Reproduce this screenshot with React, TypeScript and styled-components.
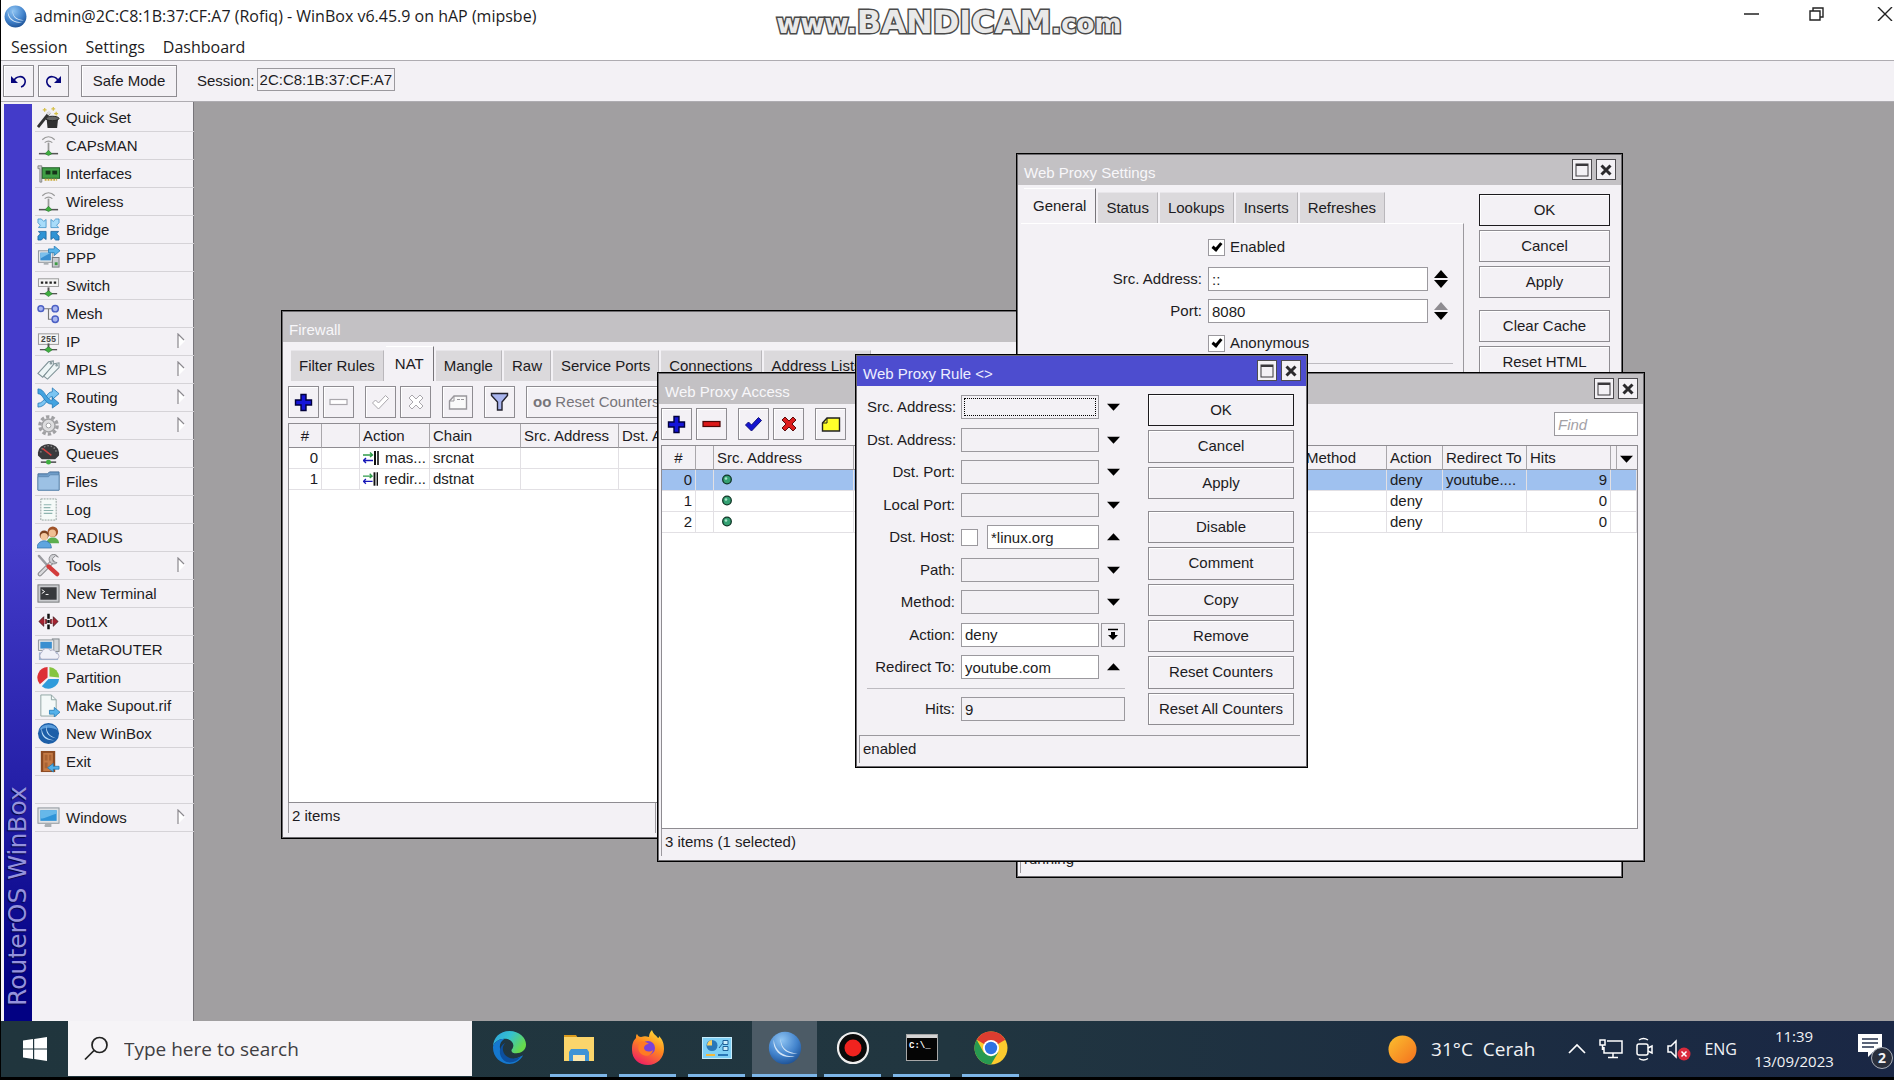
import React from 'react';
import styled, { createGlobalStyle, css } from 'styled-components';

const ui = '"Liberation Sans", Arial, sans-serif';
const shell = '"Open Sans", "Segoe UI", sans-serif';
const face = '#f3f1f5';
const ink = '#1c1b22';
const line = '#9b999e';

const Global = createGlobalStyle`
  *, *::before, *::after { box-sizing: border-box; }
  html, body, #root { height: 100%; }
  body { margin: 0; background: #000; color: ${ink}; font: 15px/20px ${ui}; overflow: hidden; }
  button, input, select { font: inherit; color: inherit; margin: 0; border-radius: 0; }
  button { padding: 0; cursor: default; }
`;

const Screen = styled.div`
  display: flex;
  flex-direction: column;
  height: 100%;
  padding: 0 0 3px 1px;
`;

/* ---------- application chrome ---------- */

const TitleStrip = styled.header`
  display: grid;
  grid-template-columns: 1fr auto 1fr;
  align-items: start;
  height: 37px;
  padding-left: 3px;
  background: #fff;
  font: 16px/24px ${shell};
`;
const AppName = styled.h1`
  display: flex;
  align-items: center;
  gap: 7px;
  margin: 0;
  padding-top: 4px;
  font: inherit;
  white-space: nowrap;
`;
const Watermark = styled.div`
  display: flex;
  align-items: baseline;
  padding-top: 7px;
  font: bold 26px/30px "DejaVu Sans", sans-serif;
  color: #e9e9e9;
  -webkit-text-stroke: 3px #4a4a4a;
  paint-order: stroke fill;
`;
const WatermarkName = styled.span`
  font-size: 32px;
`;
const Controls = styled.div`
  display: flex;
  justify-content: flex-end;
  overflow: hidden;
`;
const Control = styled.button`
  display: flex;
  align-items: center;
  justify-content: center;
  flex: none;
  width: 64px;
  height: 28px;
  border: 0;
  background: none;
  &:last-child { width: 46px; justify-content: flex-end; }
`;
const MenuBar = styled.nav`
  display: flex;
  align-items: flex-start;
  gap: 18px;
  height: 24px;
  padding: 0 10px;
  background: #fff;
  border-bottom: 1px solid #aeacb1;
`;
const MenuItem = styled.button`
  border: 0;
  background: none;
  font: 16px/20px ${shell};
`;
const MainBar = styled.div`
  display: flex;
  align-items: center;
  height: 41px;
  padding: 0 2px;
  background: ${face};
  border-bottom: 1px solid #aeacb1;
`;
const plate = css`
  border: 1px solid #8e8c91;
  background: ${face};
  box-shadow: inset 1px 1px 0 #fff;
`;
const ToolButton = styled.button<{ $wide?: boolean }>`
  ${plate}
  display: flex;
  align-items: center;
  justify-content: center;
  gap: 4px;
  flex: none;
  width: ${(p) => (p.$wide ? 'auto' : '31px')};
  padding: ${(p) => (p.$wide ? '0 6px' : '0')};
  height: 32px;
  color: inherit;
  &:disabled { color: #77757a; }
`;
const ToolGroup = styled.div`
  display: flex;
  gap: 4px;
`;
const SafeMode = styled(ToolButton)`
  width: 96px;
  margin: 0 20px 0 12px;
`;
const SessionField = styled.input`
  width: 138px;
  height: 23px;
  margin: 0 0 4px 2px;
  padding: 0 2px;
  border: 1px solid ${line};
  background: ${face};
`;

/* ---------- sidebar ---------- */

const Main = styled.main`
  display: flex;
  flex: 1;
  min-height: 0;
`;
const Side = styled.aside`
  display: flex;
  flex: none;
  width: 193px;
  padding: 2px 0 0 3px;
  background: ${face};
  border-right: 1px solid #77757a;
`;
const Spine = styled.div`
  display: flex;
  flex: none;
  width: 28px;
  padding-top: 15px;
  background: linear-gradient(to top, #433bc9 0%, #433bc9 48%, #2520a8 74%, #020183 96%);
  color: #9492dc;
  font: 25px/28px "DejaVu Sans", sans-serif;
  text-shadow: -1px -1px 1px #06053c;
  writing-mode: vertical-rl;
  transform: rotate(180deg);
  white-space: nowrap;
`;
const SideList = styled.ul`
  flex: 1;
  margin: 0;
  padding: 0 3px;
  list-style: none;
`;
const SideItem = styled.li`
  height: 28px;
  border-bottom: 1px solid #d5d3d7;
`;
const SideButton = styled.button`
  display: grid;
  grid-template-columns: 23px 1fr 10px;
  column-gap: 6px;
  align-items: center;
  width: 100%;
  height: 27px;
  padding: 0 10px 0 2px;
  border: 0;
  background: none;
  text-align: left;
  white-space: nowrap;
`;

/* ---------- windows on the desktop ---------- */

const Desktop = styled.section`
  position: relative;
  flex: 1;
  overflow: hidden;
  background: #a19fa1;
`;
const Frame = styled.section<{ $x: number; $y: number; $w: number; $h: number }>`
  position: absolute;
  left: ${(p) => p.$x}px;
  top: ${(p) => p.$y}px;
  width: ${(p) => p.$w}px;
  height: ${(p) => p.$h}px;
  display: flex;
  flex-direction: column;
  border: 1px solid #000;
  outline: 1px solid #6c6a6e;
  outline-offset: -2px;
  background: ${face};
`;
const Caption = styled.header<{ $active?: boolean }>`
  display: flex;
  align-items: center;
  gap: 4px;
  flex: none;
  height: 31px;
  padding: 0 6px 0 7px;
  background: ${(p) => (p.$active ? '#4d4dcf' : '#c3c1c4')};
  color: ${(p) => (p.$active ? '#eeedff' : '#f8f7fa')};
`;
const CaptionText = styled.h2`
  flex: 1;
  margin: 0;
  padding-top: 6px;
  font: inherit;
`;
const CaptionButton = styled.button`
  display: flex;
  align-items: center;
  justify-content: center;
  width: 20px;
  height: 21px;
  border: 1px solid #4e4c50;
  background: ${face};
  color: #2b2a2d;
`;
const StatusBar = styled.footer<{ $tall?: boolean }>`
  display: flex;
  flex: none;
  height: ${(p) => (p.$tall ? '30px' : '27px')};
  border-left: 1px solid ${line};
`;
const StatusCell = styled.div<{ $w?: number }>`
  flex: ${(p) => (p.$w ? 'none' : '1')};
  width: ${(p) => (p.$w ? p.$w + 'px' : 'auto')};
  padding: 3px;
  & + & { border-left: 1px solid ${line}; }
`;
const Tabs = styled.div`
  display: flex;
  align-items: flex-end;
  gap: 2px;
  flex: none;
  height: 35px;
  padding-left: 3px;
`;
const Tab = styled.button<{ $on?: boolean }>`
  height: ${(p) => (p.$on ? '35px' : '31px')};
  padding: ${(p) => (p.$on ? '0 9px' : '0 8px')};
  border: 0;
  border-top: 1px solid ${(p) => (p.$on ? '#fff' : '#e8e6ea')};
  border-right: 1px solid ${(p) => (p.$on ? '#77757a' : '#b9b7bb')};
  background: ${(p) => (p.$on ? face : '#dbd9dc')};
  white-space: nowrap;
`;
const WindowBody = styled.div<{ $pad: number }>`
  display: flex;
  flex-direction: column;
  flex: 1;
  min-height: 0;
  padding: 4px 6px 5px ${(p) => p.$pad}px;
`;
const ToolRow = styled.div<{ $top?: number }>`
  display: flex;
  align-items: center;
  gap: 11px;
  flex: none;
  padding: ${(p) => p.$top ?? 0}px 0 5px;
`;
const Find = styled.input`
  width: 84px;
  height: 24px;
  margin-left: auto;
  padding: 0 3px;
  border: 1px solid ${line};
  background: #fff;
  &::placeholder { color: #a3a1a6; font-style: italic; opacity: 1; }
`;
const ListBox = styled.div`
  flex: 1;
  min-height: 0;
  overflow: hidden;
  border: 1px solid #8e8c91;
  background: #fff;
`;
const Grid = styled.table`
  width: 100%;
  table-layout: fixed;
  border-collapse: separate;
  border-spacing: 0;
  th, td {
    overflow: hidden;
    padding: 0 3px;
    white-space: nowrap;
    text-overflow: ellipsis;
    text-align: left;
    font-weight: normal;
  }
  th {
    height: 24px;
    background: ${face};
    border-right: 1px solid #a9a7ab;
    border-bottom: 1px solid #8e8c91;
  }
  th:last-child { border-right: 0; }
  td {
    height: 21px;
    line-height: 18px;
    border-right: 1px solid #e2e0e4;
    border-bottom: 1px solid #e2e0e4;
  }
  th:first-child { text-align: center; }
  td:first-child { text-align: right; }
`;
const Row = styled.tr<{ $selected?: boolean }>`
  background: ${(p) => (p.$selected ? '#9fc1ef' : '#fff')};
`;
const NumCell = styled.td`
  && { text-align: right; }
`;
const RuleKind = styled.span`
  display: flex;
  align-items: center;
  gap: 6px;
`;

/* ---------- forms ---------- */

const Push = styled.button<{ $default?: boolean }>`
  ${plate}
  min-height: 32px;
  border-color: ${(p) => (p.$default ? '#1b1a1d' : '#8e8c91')};
`;
const PushColumn = styled.div<{ $w: number; $fill?: boolean }>`
  display: flex;
  flex-direction: column;
  gap: 4px;
  flex: none;
  width: ${(p) => p.$w}px;
  ${Push} { flex: ${(p) => (p.$fill ? '1' : 'none')}; }
`;
const PushGap = styled.div`
  height: 4px;
`;
const box = css<{ $filled?: boolean }>`
  width: 100%;
  min-width: 0;
  height: 24px;
  padding: 0 3px;
  border: 1px solid ${line};
  background: ${(p) => (p.$filled ? '#fff' : face)};
`;
const Field = styled.input<{ $filled?: boolean }>`
  ${box}
`;
const FocusedField = styled(Field)`
  outline: 1px dotted #000;
  outline-offset: -4px;
`;
const Choice = styled.select<{ $filled?: boolean }>`
  ${box}
  appearance: none;
`;
const Tick = styled.input.attrs({ type: 'checkbox' })`
  appearance: none;
  display: grid;
  place-items: center;
  flex: none;
  width: 17px;
  height: 17px;
  border: 1px solid ${line};
  background: #fff;
  &:checked::after {
    content: '';
    width: 6px;
    height: 10px;
    margin-bottom: 3px;
    border: solid #000;
    border-width: 0 3px 3px 0;
    transform: rotate(40deg);
  }
`;
const RuleBody = styled.div`
  display: flex;
  justify-content: space-between;
  flex: 1;
  padding: 8px 13px 10px 11px;
`;
const RuleForm = styled.form`
  display: flex;
  flex-direction: column;
  justify-content: space-between;
  width: 258px;
  padding: 1px 0 4px;
`;
const Rule = styled.hr`
  width: 100%;
  height: 1px;
  margin: 0;
  border: 0;
  background: #bdbbc0;
`;
const FormRow = styled.div`
  display: grid;
  grid-template-columns: 92px 138px 24px;
  column-gap: 2px;
  align-items: center;
  > label { padding-right: 4px; text-align: right; white-space: nowrap; }
`;
const WideField = styled(Field)`
  grid-column: 2 / 4;
`;
const HostPair = styled.div`
  display: flex;
  align-items: center;
  gap: 9px;
  width: 100%;
`;
const Expand = styled.button<{ $boxed?: boolean }>`
  display: flex;
  align-items: center;
  justify-content: center;
  width: 24px;
  height: 24px;
  border: ${(p) => (p.$boxed ? `1px solid ${line}` : '0')};
  background: none;
`;
const RuleStatus = styled(StatusBar)`
  height: 28px;
  margin: 0 7px 4px 3px;
  border-top: 1px solid ${line};
`;

const SettingsBody = styled.div`
  display: flex;
  justify-content: space-between;
  flex: 1;
  min-height: 0;
  padding: 3px 12px 0 4px;
`;
const SettingsPane = styled.div`
  display: flex;
  flex-direction: column;
  width: 443px;
`;
const SettingsForm = styled.form`
  display: flex;
  flex-direction: column;
  gap: 8px;
  flex: 1;
  padding: 11px 10px 0 0;
  border-top: 1px solid #fff;
  border-right: 1px solid ${line};
`;
const SettingsRow = styled.div`
  display: grid;
  grid-template-columns: 181px 220px 14px;
  column-gap: 6px;
  align-items: center;
  min-height: 24px;
  > label { text-align: right; }
`;
const TickLabel = styled.label`
  grid-column: 2;
  display: flex;
  align-items: center;
  gap: 5px;
`;
const Spin = styled.button`
  border: 0;
  background: none;
  line-height: 0;
`;
const SettingsPushes = styled(PushColumn)`
  padding-top: 6px;
`;

/* ---------- taskbar ---------- */

const TaskBar = styled.footer`
  display: flex;
  flex: none;
  height: 56px;
  background: linear-gradient(90deg, #20353d 0%, #213640 50%, #1b2b42 85%, #1a2745 100%);
  color: #f1f2f5;
  font: 17px/24px ${shell};
`;
const Start = styled.button`
  width: 67px;
  border: 0;
  background: none;
  line-height: 0;
`;
const SearchBox = styled.label`
  display: flex;
  align-items: center;
  gap: 13px;
  width: 404px;
  margin-bottom: 1px;
  padding-left: 16px;
  background: #f6f4f7;
  color: #3b3a3e;
`;
const SearchInput = styled.input`
  flex: 1;
  border: 0;
  outline: 0;
  background: none;
  font: 19px/28px ${shell};
  &::placeholder { color: #3f3e42; opacity: 1; }
`;
const Apps = styled.div`
  display: flex;
  flex: 1;
  padding-left: 3px;
`;
const AppButton = styled.button<{ $open?: boolean; $active?: boolean }>`
  display: flex;
  align-items: center;
  justify-content: center;
  width: ${(p) => (p.$active ? '65px' : '57px')};
  margin: ${(p) => (p.$active ? '0 1px' : '0 6px')};
  border: 0;
  border-bottom: 3px solid ${(p) => (p.$open ? '#7db6e8' : 'transparent')};
  background: ${(p) => (p.$active ? '#4c5b66' : 'none')};
`;
const Tray = styled.div`
  display: flex;
  align-items: center;
  padding-right: 1px;
`;
const Weather = styled.button`
  display: flex;
  align-items: center;
  gap: 14px;
  margin-right: 33px;
  border: 0;
  background: none;
  font-size: 19px;
  white-space: pre;
`;
const TrayButton = styled.button`
  display: flex;
  margin-right: 13px;
  border: 0;
  background: none;
  font-size: 16px;
`;
const Clock = styled.time`
  width: 84px;
  margin: 0 22px 0 2px;
  font-size: 15px;
  line-height: 25px;
  text-align: center;
  white-space: nowrap;
`;
const Notice = styled.button`
  position: relative;
  width: 35px;
  height: 40px;
  border: 0;
  background: none;
  text-align: left;
`;
const Badge = styled.span`
  position: absolute;
  right: 0;
  bottom: 0;
  width: 22px;
  height: 22px;
  border: 1px solid #a9aeb8;
  border-radius: 50%;
  background: #2a2f3c;
  font: bold 14px/20px ${shell};
  text-align: center;
`;

/* ---------- drawings ---------- */

const Orb = ({ size }: { size: number }) => (
  <svg width={size} height={size} viewBox="0 0 24 24">
    <defs>
      <radialGradient id={'orb' + size} cx="40%" cy="25%" r="80%">
        <stop offset="0" stopColor="#8fc4f2" /><stop offset=".6" stopColor="#4283cc" /><stop offset="1" stopColor="#1c4f92" />
      </radialGradient>
    </defs>
    <circle cx="12" cy="12" r="11.4" fill={`url(#orb${size})`} />
    <path d="M4 6c1 8 6 12 15 12-8 2-16-3-15-12zM9 5c0 7 4 10 12 11-8 1-13-4-12-11z" fill="#e3f0fb" opacity=".9" />
  </svg>
);

const Antenna = () => (
  <g>
    <path d="M5.500 6c4-4 9-4 13 0M8 9c3-2.500 5-2.500 8 0" fill="none" stroke="#9a9a9a" strokeWidth="1.300" />
    <path d="M12 9v10" stroke="#999" strokeWidth="1.800" />
    <path d="M2 20.500h20" stroke="#555" strokeWidth="1.600" />
    <path d="M8.500 20.500l3.500-3.500 3.500 3.500-3.500 2z" fill="#3fae3f" stroke="#1f6f26" strokeWidth=".6" />
  </g>
);
const NetFoot = () => (
  <g>
    <path d="M3 20.500h18" stroke="#555" strokeWidth="1.400" /><path d="M12 14v5" stroke="#555" strokeWidth="2" />
    <path d="M8 20.500l4-3 4 3-4 3z" fill="#3fae3f" stroke="#1f6f26" strokeWidth=".6" />
  </g>
);
const Pc = () => (
  <g>
    <rect x="1.500" y="5" width="15" height="12" fill="#e6e8ea" stroke="#8d949a" />
    <rect x="3.500" y="7" width="11" height="8" fill="#3a8fd0" />
    <path d="M3.500 13l11-6h-11z" fill="#7cc0ec" />
    <path d="M7 17h5v2.500H7z" fill="#a9aeb2" />
  </g>
);

const glyphs: Record<string, React.ReactNode> = {
  'Quick Set': (
    <g>
      <path d="M10 13h12l-1 10H11z" fill="#303030" /><ellipse cx="16" cy="13" rx="7" ry="2.300" fill="#666" stroke="#222" />
      <path d="M1 22L13 7" stroke="#333" strokeWidth="3" /><path d="M11 9l2.500-3" stroke="#ddd" strokeWidth="3" />
      <path d="M8 2v4M6 4h4M17 1v4M15 3h4M20 6v4M18 8h4" stroke="#d6c04a" strokeWidth="1.300" />
    </g>
  ),
  CAPsMAN: <Antenna />,
  Wireless: <Antenna />,
  Interfaces: (
    <g>
      <path d="M1 4h4v17H3V7H1z" fill="#c9cbcc" stroke="#777" strokeWidth=".8" />
      <rect x="5.500" y="6" width="18" height="11" fill="#3f9f45" stroke="#1f5f25" />
      <rect x="9" y="9" width="5" height="4" fill="#16351a" /><rect x="16" y="9" width="5" height="4" fill="#16351a" />
      <path d="M8 18.500h13" stroke="#c8a93a" strokeWidth="2" strokeDasharray="2 1" />
    </g>
  ),
  Bridge: (
    <g strokeWidth=".8">
      <path d="M1 1h3.500l2.500 2.500 2.500-2V10H1.500l2-2.500L1 5z" fill="#a8dcfa" stroke="#3a8dc4" />
      <path d="M23 1h-3.500l-2.500 2.500-2.500-2V10h8l-2-2.500L23 5z" fill="#a8dcfa" stroke="#3a8dc4" />
      <path d="M1 23h3.500l2.500-2.500 2.500 2V14H1.500l2 2.500L1 19z" fill="#2f93d4" stroke="#15619a" />
      <path d="M23 23h-3.500l-2.500-2.500-2.500 2V14h8l-2 2.500 2.500 2.500z" fill="#2f93d4" stroke="#15619a" />
    </g>
  ),
  PPP: (
    <g>
      <Pc /><rect x="16" y="12" width="7" height="10" fill="#c9ccd0" stroke="#74797e" /><rect x="18.500" y="17" width="3" height="3" fill="#3e9b45" />
      <path d="M12 3h6V0l6 5-6 5V7h-6z" fill="#58b4ea" stroke="#1f78b5" strokeWidth=".8" />
    </g>
  ),
  Switch: (
    <g><rect x="1.500" y="5" width="21" height="8" fill="#f4f4f4" stroke="#999" /><path d="M4 9h16" stroke="#222" strokeWidth="2.500" strokeDasharray="2.500 2" /><NetFoot /></g>
  ),
  Mesh: (
    <g fill="#a9b6f0" stroke="#4c60c4" strokeWidth="1.500">
      <path d="M7 7h9M12 7v11h5" fill="none" stroke="#777" strokeWidth="1.200" />
      <circle cx="4" cy="7" r="3" /><circle cx="19" cy="7" r="3.300" /><circle cx="19" cy="18" r="3.300" />
    </g>
  ),
  IP: (
    <g><rect x="1.500" y="4" width="21" height="11" fill="#f4f4f4" stroke="#999" />
      <text x="12" y="13" fontSize="9" fontFamily="Liberation Mono, monospace" fontWeight="bold" textAnchor="middle" fill="#444">255</text><NetFoot /></g>
  ),
  MPLS: (
    <g fill="#eef5f6" stroke="#7f9297" strokeWidth="1.100">
      <path d="M1 16L12 4l5-1v5L6 20z" /><path d="M7 19L18 6l5-1v5L11 22z" /><circle cx="20.500" cy="7.500" r=".8" /><circle cx="14.500" cy="5.500" r=".8" />
    </g>
  ),
  Routing: (
    <g stroke="#1d74b5" strokeWidth=".8">
      <path d="M1 18c8 0 8-12 15-12V2l7 6-7 6v-3c-5 0-6 11-15 11z" fill="#7cc5f2" />
      <path d="M1 3c8 0 8 12 15 12v-3l7 6-7 5v-4C7 19 7 8 1 8z" fill="#43a3e0" />
    </g>
  ),
  System: (
    <g fill="none" stroke="#a0a0a3"><circle cx="12" cy="12" r="9" strokeWidth="3.500" strokeDasharray="3.500 2.150" /><circle cx="12" cy="12" r="6.800" fill="#dedee0" strokeWidth="1.500" /><circle cx="12" cy="12" r="2.500" fill="#fff" /></g>
  ),
  Queues: (
    <g><path d="M1 14V11a11 9 0 0122 0v3l-4 4H5z" fill="#3a3a3d" /><path d="M4 11a8 7 0 0116 0" fill="none" stroke="#888" strokeWidth="1.500" strokeDasharray="1.500 2" /><path d="M6 7l9 7" stroke="#d24040" strokeWidth="1.600" />
      <path d="M4 21h16" stroke="#444" strokeWidth="1.500" /><circle cx="12" cy="21" r="2.600" fill="#3fae3f" /></g>
  ),
  Files: (
    <g><path d="M1 21V4h10l2-2h10v19z" fill="#6f9cc8" stroke="#47709a" /><path d="M1 21V7h11l2-2h9v16z" fill="#9cc1e4" stroke="#5a84ad" strokeWidth=".8" /></g>
  ),
  Log: (
    <g><rect x="4" y="1" width="16" height="22" fill="#f5faf8" stroke="#8fa09c" strokeDasharray="2 1" /><path d="M7 7h8M7 10h7M7 13h10M7 16h9" stroke="#8fb5b0" strokeWidth="1.200" /></g>
  ),
  RADIUS: (
    <g><circle cx="16.500" cy="6" r="5.500" fill="#a0532a" /><circle cx="16" cy="7.500" r="3.800" fill="#f0bf94" /><path d="M10 18c0-8 13-8 13 0z" fill="#5cae4e" />
      <circle cx="7.500" cy="9.500" r="4.800" fill="#7c4220" /><circle cx="7.500" cy="11" r="3.800" fill="#f3c79e" /><path d="M0 23c0-10 15-10 15 0z" fill="#5fa5df" stroke="#2d6ca5" strokeWidth=".7" /></g>
  ),
  Tools: (
    <g strokeLinecap="round"><path d="M2 2l8 9" stroke="#9b9ba0" strokeWidth="2.500" /><path d="M3 21L16 8" stroke="#8a8a8e" strokeWidth="4.500" /><path d="M3 21L16 8" stroke="#dadadd" strokeWidth="2.500" />
      <path d="M22 3a5 5 0 10-1 6l-4-1-1-3 3-3z" fill="#d0d0d4" stroke="#8a8a8e" /><path d="M12 13l9 8" stroke="#d33c3c" strokeWidth="4.500" /></g>
  ),
  'New Terminal': (
    <g><rect x="1" y="3" width="22" height="18" fill="#c9cbce" stroke="#75777a" /><rect x="3.500" y="5.500" width="17" height="13" fill="#37393c" /><path d="M5 8l3 2-3 2M9 13h3" fill="none" stroke="#fff" /></g>
  ),
  Dot1X: (
    <g><path d="M12 4v5M12 10.500v3M12 15v5" stroke="#111" strokeWidth="2.600" /><path d="M2 12l5-5v3h3v4H7v3zM22 12l-5-5v3h-3v4h3v3z" fill="#a32230" stroke="#3d1016" strokeWidth=".8" /><path d="M8 9v6M16 9v6" stroke="#e9c9cc" strokeWidth=".8" /></g>
  ),
  MetaROUTER: (
    <g><rect x="16" y="1" width="7" height="13" fill="#d3d6d9" stroke="#7f8488" /><g><path d="M1.500 2h16v11h-16z" fill="#e6e8ea" stroke="#8d949a" /><path d="M3.500 4h12v7h-12z" fill="#3a8fd0" /></g>
      <path d="M2 23V15h20v8z" fill="#9fb4d0" /><path d="M5 22a4 4 0 010-7 5 5 0 019-2 4 4 0 016 3 3 3 0 010 6z" fill="#f0f1f8" stroke="#a7a9c0" strokeWidth=".8" /></g>
  ),
  Partition: (
    <g><path d="M11 12V1A11 11 0 003 19z" fill="#dd2f35" /><path d="M13 11V1a11 11 0 0110 11z" fill="#86c440" /><path d="M12 13.500h11A11 11 0 015 21z" fill="#2f9bdb" /></g>
  ),
  'Make Supout.rif': (
    <g><path d="M4 1h11l5 5v17H4z" fill="#f4f9f8" stroke="#8fa5a3" /><path d="M15 1v5h5" fill="none" stroke="#8fa5a3" /><path d="M13 17h5v-3l6 5-6 5v-3h-5z" fill="#53b1ea" stroke="#1f78b5" strokeWidth=".8" /></g>
  ),
  'New WinBox': (
    <g><circle cx="12" cy="12" r="11" fill="#1d5fa8" /><path d="M2 9a11 11 0 0120 0c-6-4-14-4-20 0z" fill="#5b9ddb" /><path d="M5 6c0 8 5 12 13 13-8 1-15-4-13-13zM10 4c0 8 4 11 10 13-7-1-12-5-10-13z" fill="#bfe0fa" /></g>
  ),
  Exit: (
    <g><path d="M4 1h15v22H4z" fill="#8c4a22" /><path d="M6.500 3h10v19h-10z" fill="#c57a45" /><path d="M8 5h3v6H8zM12.500 5h2.500v6h-2.500zM8 13h3v6H8z" fill="#a96234" /><path d="M23 17h-6v-3l-6 4.500 6 4.500v-3h6z" fill="#53b1ea" stroke="#1f78b5" strokeWidth=".8" /></g>
  ),
  Windows: (
    <g><rect x="1" y="2" width="22" height="16" fill="#dfe2e5" stroke="#8d949a" /><rect x="3.500" y="4.500" width="17" height="11" fill="#2f94d8" /><path d="M3.500 13c6 0 11-4 17-5V4.500h-17z" fill="#66b8ea" /><path d="M9 18h6v4H8v-2z" fill="#a9aeb2" /></g>
  ),
};

const Flyout = () => (
  <svg width="10" height="17" viewBox="0 0 10 17"><path d="M1 1v14l7-7z" fill="#fff" /><path d="M1 15V1l6 6" fill="none" stroke="#8b898e" strokeWidth="1.200" /></svg>
);
const Plus = () => (
  <svg width="19" height="19" viewBox="0 0 19 19"><path d="M7 1.500h5V7h5.500v5H12v5.500H7V12H1.500V7H7z" fill="#1414d8" stroke="#00003c" strokeWidth="1.400" /></svg>
);
const Minus = ({ off }: { off?: boolean }) => (
  <svg width="19" height="8" viewBox="0 0 19 8"><rect x="1" y="1.500" width="17" height="5" fill={off ? '#fff' : '#dc1818'} stroke={off ? '#a9a7ac' : '#4c0606'} strokeWidth="1.200" /></svg>
);
const Check = ({ off }: { off?: boolean }) => (
  <svg width="19" height="17" viewBox="0 0 19 17"><path d="M1.500 9l3-3 3 3 7-7.500 3 3L7.500 15z" fill={off ? '#fff' : '#1414d0'} stroke={off ? '#a9a7ac' : '#10107a'} /></svg>
);
const Cross = ({ off }: { off?: boolean }) => (
  <svg width="18" height="18" viewBox="0 0 18 18"><path d="M2 5l3-3 4 4 4-4 3 3-4 4 4 4-3 3-4-4-4 4-3-3 4-4z" fill={off ? '#fff' : '#dc1c1c'} stroke={off ? '#a9a7ac' : '#5c0c0c'} /></svg>
);
const Note = ({ off }: { off?: boolean }) => (
  <svg width="20" height="17" viewBox="0 0 20 17"><path d="M1.500 7l4.500-5h12.500v13H1.500z" fill={off ? '#fafafa' : '#ffff2a'} stroke={off ? '#98969b' : '#222'} strokeWidth="1.400" /><path d="M6 2v5H1.500" fill="none" stroke={off ? '#98969b' : '#222'} />{off && <path d="M9 5.500h7" stroke="#98969b" strokeDasharray="3 1" />}</svg>
);
const Funnel = () => (
  <svg width="19" height="20" viewBox="0 0 19 20"><path d="M1.500 1.500h16v2L12 10v8H7.500v-8L1.500 3.500z" fill="#a9b5ee" stroke="#22222e" strokeWidth="1.400" /></svg>
);
const Turn = ({ redo }: { redo?: boolean }) => (
  <svg width="17" height="15" viewBox="0 0 17 15" transform={redo ? 'scale(-1 1)' : undefined}>
    <path d="M1 2v7h7z" fill="#06067c" /><path d="M4 6.500C6 2 13 1 15 6c1 3-1 6-4 7" fill="none" stroke="#06067c" strokeWidth="1.600" />
  </svg>
);
const NatMark = () => (
  <svg width="16" height="14" viewBox="0 0 16 14"><path d="M0 4h10M7 1.500L9.500 4 7 6" fill="none" stroke="#2f9b4a" strokeWidth="1.400" /><path d="M10 9.500H0M3 7L.5 9.500 3 12" fill="none" stroke="#1717b8" strokeWidth="1.400" /><path d="M12 0v14" stroke="#111" strokeWidth="2" /><path d="M15 0v14" stroke="#111" strokeWidth="1.600" /></svg>
);
const Bullet = () => (
  <svg width="20" height="11" viewBox="0 0 20 11"><circle cx="10" cy="5.500" r="4.300" fill="#35a173" stroke="#0f3626" strokeWidth="1.300" /><circle cx="9" cy="4.500" r="1.300" fill="#a8e2c8" /></svg>
);
const Arrow = ({ up }: { up?: boolean }) => (
  <svg width="13" height="8" viewBox="0 0 14 8"><path d={up ? 'M0 7.500L7 0l7 7.500z' : 'M0 .5h14L7 8z'} fill="#000" /></svg>
);
const Spinner = ({ dim }: { dim?: boolean }) => (
  <svg width="14" height="18" viewBox="0 0 14 18"><path d="M0 8L7 0l7 8z" fill={dim ? '#8e8c91' : '#000'} /><path d="M0 10h14l-7 8z" fill="#000" /></svg>
);
const ListArrow = () => (
  <svg width="12" height="14" viewBox="0 0 12 14"><path d="M1 1.500h10" stroke="#000" strokeWidth="1.500" /><path d="M6 4v4" stroke="#000" strokeWidth="4" /><path d="M1 7h10l-5 5z" fill="#000" /></svg>
);

/* ---------- pieces ---------- */

type WinProps = { x: number; y: number; w: number; h: number; title: string; active?: boolean; bare?: boolean; children: React.ReactNode };
const Win = ({ x, y, w, h, title, active, bare, children }: WinProps) => (
  <Frame $x={x} $y={y} $w={w} $h={h} aria-label={title}>
    <Caption $active={active}>
      <CaptionText>{title}</CaptionText>
      {!bare && (
        <>
          <CaptionButton aria-label="Maximize">
            <svg width="14" height="14" viewBox="0 0 14 14"><rect x="1" y="1" width="12" height="12" fill="none" stroke="#3a383c" /><path d="M1 2h12" stroke="#3a383c" strokeWidth="2" /></svg>
          </CaptionButton>
          <CaptionButton aria-label="Close">
            <svg width="12" height="12" viewBox="0 0 12 12"><path d="M1.500 1.500l9 9M10.500 1.500l-9 9" stroke="#2b2a2d" strokeWidth="3" /></svg>
          </CaptionButton>
        </>
      )}
    </Caption>
    {children}
  </Frame>
);

const sideItems = ['Quick Set', 'CAPsMAN', 'Interfaces', 'Wireless', 'Bridge', 'PPP', 'Switch', 'Mesh', 'IP', 'MPLS', 'Routing', 'System', 'Queues', 'Files', 'Log', 'RADIUS', 'Tools', 'New Terminal', 'Dot1X', 'MetaROUTER', 'Partition', 'Make Supout.rif', 'New WinBox', 'Exit', '', 'Windows'];
const withMenu = new Set(['IP', 'MPLS', 'Routing', 'System', 'Tools', 'Windows']);

const Cols = ({ widths }: { widths: (number | null)[] }) => (
  <colgroup>{widths.map((w, i) => <col key={i} width={w ?? undefined} />)}</colgroup>
);

const Firewall = () => (
  <Win x={87} y={208} w={780} h={529} title="Firewall" bare>
    <WindowBody $pad={6}>
      <Tabs role="tablist">
        {['Filter Rules', 'NAT', 'Mangle', 'Raw', 'Service Ports', 'Connections', 'Address Lists'].map((t) => (
          <Tab key={t} role="tab" aria-selected={t === 'NAT'} $on={t === 'NAT'}>{t}</Tab>
        ))}
      </Tabs>
      <ToolRow $top={5}>
        <ToolGroup><ToolButton aria-label="Add"><Plus /></ToolButton><ToolButton aria-label="Remove" disabled><Minus off /></ToolButton></ToolGroup>
        <ToolGroup><ToolButton aria-label="Enable" disabled><Check off /></ToolButton><ToolButton aria-label="Disable" disabled><Cross off /></ToolButton></ToolGroup>
        <ToolButton aria-label="Comment" disabled><Note off /></ToolButton>
        <ToolButton aria-label="Filter"><Funnel /></ToolButton>
        <ToolButton $wide disabled><b>oo</b>Reset Counters</ToolButton>
      </ToolRow>
      <ListBox>
        <Grid>
          <Cols widths={[33, 38, 70, 91, 98, null]} />
          <thead><tr><th>#</th><th /><th>Action</th><th>Chain</th><th>Src. Address</th><th>Dst. Address</th></tr></thead>
          <tbody>
            <Row><td>0</td><td /><td><RuleKind><NatMark />mas...</RuleKind></td><td>srcnat</td><td /><td /></Row>
            <Row><td>1</td><td /><td><RuleKind><NatMark />redir...</RuleKind></td><td>dstnat</td><td /><td /></Row>
          </tbody>
        </Grid>
      </ListBox>
      <StatusBar $tall><StatusCell $w={366}>2 items</StatusCell><StatusCell /></StatusBar>
    </WindowBody>
  </Win>
);

const Settings = () => (
  <Win x={822} y={51} w={607} h={725} title="Web Proxy Settings">
    <SettingsBody>
      <SettingsPane>
        <Tabs role="tablist">
          {['General', 'Status', 'Lookups', 'Inserts', 'Refreshes'].map((t) => (
            <Tab key={t} role="tab" aria-selected={t === 'General'} $on={t === 'General'}>{t}</Tab>
          ))}
        </Tabs>
        <SettingsForm>
          <SettingsRow><TickLabel><Tick defaultChecked />Enabled</TickLabel></SettingsRow>
          <SettingsRow><label htmlFor="ps-src">Src. Address:</label><Field id="ps-src" $filled defaultValue="::" /><Spin type="button" aria-label="Change address"><Spinner /></Spin></SettingsRow>
          <SettingsRow><label htmlFor="ps-port">Port:</label><Field id="ps-port" $filled defaultValue="8080" /><Spin type="button" aria-label="Change port"><Spinner dim /></Spin></SettingsRow>
          <SettingsRow><TickLabel><Tick defaultChecked />Anonymous</TickLabel></SettingsRow>
          <Rule />
        </SettingsForm>
      </SettingsPane>
      <SettingsPushes $w={131}>
        <Push $default>OK</Push><Push>Cancel</Push><Push>Apply</Push>
        <PushGap />
        <Push>Clear Cache</Push><Push>Reset HTML</Push>
      </SettingsPushes>
    </SettingsBody>
    <RuleStatus><StatusCell>running</StatusCell></RuleStatus>
  </Win>
);

const Access = () => (
  <Win x={463} y={270} w={988} h={490} title="Web Proxy Access">
    <WindowBody $pad={3}>
      <ToolRow>
        <ToolGroup><ToolButton aria-label="Add"><Plus /></ToolButton><ToolButton aria-label="Remove"><Minus /></ToolButton></ToolGroup>
        <ToolGroup><ToolButton aria-label="Enable"><Check /></ToolButton><ToolButton aria-label="Disable"><Cross /></ToolButton></ToolGroup>
        <ToolButton aria-label="Comment"><Note /></ToolButton>
        <Find placeholder="Find" aria-label="Find" />
      </ToolRow>
      <ListBox>
        <Grid>
          <Cols widths={[34, 18, 140, null, 84, 56, 84, 84, 6, 20]} />
          <thead><tr><th>#</th><th /><th>Src. Address</th><th /><th>Method</th><th>Action</th><th>Redirect To</th><th>Hits</th><th /><th><Arrow /></th></tr></thead>
          <tbody>
            {[['youtube....', '9'], ['', '0'], ['', '0']].map(([to, hits], i) => (
              <Row key={i} $selected={i === 0}>
                <td>{i}</td><td /><td><Bullet /></td><td /><td /><td>deny</td><td>{to}</td><NumCell>{hits}</NumCell><td colSpan={2} />
              </Row>
            ))}
          </tbody>
        </Grid>
      </ListBox>
      <StatusBar><StatusCell>3 items (1 selected)</StatusCell></StatusBar>
    </WindowBody>
  </Win>
);

const ProxyRule = () => (
  <Win x={661} y={252} w={453} h={414} title="Web Proxy Rule <>" active>
    <RuleBody>
      <RuleForm>
        <FormRow><label htmlFor="r-src">Src. Address:</label><FocusedField id="r-src" /><Expand type="button" aria-label="Expand"><Arrow /></Expand></FormRow>
        {['Dst. Address:', 'Dst. Port:', 'Local Port:'].map((t) => (
          <FormRow key={t}><label htmlFor={t}>{t}</label><Field id={t} /><Expand type="button" aria-label="Expand"><Arrow /></Expand></FormRow>
        ))}
        <FormRow>
          <label htmlFor="r-host">Dst. Host:</label>
          <HostPair><Tick aria-label="Not" /><Field id="r-host" $filled defaultValue="*linux.org" /></HostPair>
          <Expand type="button" aria-label="Collapse"><Arrow up /></Expand>
        </FormRow>
        {['Path:', 'Method:'].map((t) => (
          <FormRow key={t}><label htmlFor={t}>{t}</label><Field id={t} /><Expand type="button" aria-label="Expand"><Arrow /></Expand></FormRow>
        ))}
        <FormRow>
          <label htmlFor="r-act">Action:</label>
          <Choice id="r-act" $filled defaultValue="deny"><option>deny</option></Choice>
          <Expand type="button" $boxed aria-label="Open list"><ListArrow /></Expand>
        </FormRow>
        <FormRow><label htmlFor="r-to">Redirect To:</label><Field id="r-to" $filled defaultValue="youtube.com" /><Expand type="button" aria-label="Collapse"><Arrow up /></Expand></FormRow>
        <Rule />
        <FormRow><label htmlFor="r-hits">Hits:</label><WideField id="r-hits" readOnly defaultValue="9" /></FormRow>
      </RuleForm>
      <PushColumn $w={146} $fill>
        <Push $default>OK</Push><Push>Cancel</Push><Push>Apply</Push>
        <PushGap />
        <Push>Disable</Push><Push>Comment</Push><Push>Copy</Push><Push>Remove</Push><Push>Reset Counters</Push><Push>Reset All Counters</Push>
      </PushColumn>
    </RuleBody>
    <RuleStatus><StatusCell>enabled</StatusCell></RuleStatus>
  </Win>
);

const apps: { name: string; active?: boolean; closed?: boolean; art: React.ReactNode }[] = [
  { name: 'Edge', closed: true, art: (
    <svg width="35" height="35" viewBox="0 0 36 36">
      <defs><linearGradient id="eg" x1="0" y1="0" x2="1" y2=".5"><stop offset="0" stopColor="#2b9fe0" /><stop offset=".5" stopColor="#35c1cf" /><stop offset="1" stopColor="#67d94b" /></linearGradient></defs>
      <path d="M1 18C1 8 8 1 18 1s17 7 17 14c0 6-5 9-10 9-3 0-5-1-5-3 0-1 2-2 2-5 0-4-4-7-9-7-7 0-12 5-12 9z" fill="url(#eg)" />
      <path d="M1 18c0-4 5-9 12-9-5 3-6 8-4 13 2 6 9 10 16 7 3-1 5-2 7-3-3 6-9 9-14 9C9 35 1 28 1 18z" fill="#1578cf" />
      <path d="M14 13c-4 3-4 10 1 14 4 3 10 3 15 0-5 7-13 8-18 4-6-5-5-15 2-18z" fill="#0c4f9e" />
    </svg>) },
  { name: 'File Explorer', art: (
    <svg width="32" height="28" viewBox="0 0 32 28"><path d="M1 4V1h12l2 3z" fill="#d99a1c" /><path d="M1 3h30v24H1z" fill="#fbd56b" /><path d="M6 27V18l2-3h16l2 3v9h-4v-6H10v6z" fill="#3e94d6" /><path d="M10 21h12v6H10z" fill="#fbe8ae" /></svg>) },
  { name: 'Firefox', art: (
    <svg width="34" height="36" viewBox="0 0 34 36">
      <defs><linearGradient id="ff" x1=".8" y1="0" x2=".3" y2="1"><stop offset="0" stopColor="#ffe03a" /><stop offset=".45" stopColor="#ff8a1e" /><stop offset="1" stopColor="#ee1f63" /></linearGradient></defs>
      <path d="M1 20C1 14 2 11 5 8c0-2 0-3 1-4 1 2 2 3 4 3 3-1 5-1 8 0 0-3 1-5 3-7 1 4 4 5 6 8 1 0 1-1 1-2 4 4 5 8 5 13 0 9-7 16-16 16S1 29 1 20z" fill="url(#ff)" />
      <circle cx="17" cy="18" r="7" fill="#7a42d8" /><path d="M9 12c3-1 7 0 9 2-3 0-5 2-5 4 0 3 5 5 9 2-1 5-6 7-10 5-5-2-6-8-3-13z" fill="#ff7a24" />
    </svg>) },
  { name: 'Control Panel', art: (
    <svg width="30" height="22" viewBox="0 0 30 22"><rect x=".5" y=".5" width="29" height="21" fill="#7fd0f6" stroke="#c8ecfb" /><circle cx="10" cy="8.500" r="5.500" fill="#2a78b8" /><path d="M10 8.500V3a5.500 5.500 0 00-5 5.500z" fill="#f6cf63" /><path d="M17 11l4-5M21 3.500h5v4h-5zM21 9.500h5v4h-5z" stroke="#1f6199" fill="#c9ecfb" /><path d="M4 18h9" stroke="#f4b93c" strokeWidth="2" /><path d="M16 18h10" stroke="#2a78b8" strokeWidth="2" /></svg>) },
  { name: 'WinBox', active: true, art: <Orb size={34} /> },
  { name: 'Bandicam', art: (
    <svg width="34" height="34" viewBox="0 0 34 34"><circle cx="17" cy="17" r="15" fill="#0a0a0a" stroke="#eee" strokeWidth="2.200" /><circle cx="17" cy="17" r="8.500" fill="#f0231f" /></svg>) },
  { name: 'Command Prompt', art: (
    <svg width="32" height="27" viewBox="0 0 32 27"><rect x=".5" y=".5" width="31" height="26" fill="#050505" stroke="#a8a8a8" /><path d="M1 2.500h30" stroke="#d4d4d4" strokeWidth="3" /><text x="3" y="14" fontSize="9" fontWeight="bold" fontFamily="Liberation Mono, monospace" fill="#fff">C:\_</text></svg>) },
  { name: 'Chrome', art: (
    <svg width="34" height="34" viewBox="0 0 34 34"><circle cx="17" cy="17" r="16.500" fill="#fccb2e" /><path d="M17 17L2.700 8.750A16.500 16.500 0 0131.300 8.750z" fill="#dd3d30" /><path d="M2.700 8.750A16.500 16.500 0 0017 33.500l7.300-12.300L17 25.500l-7.400-4.300z" fill="#279a50" /><circle cx="17" cy="17" r="8" fill="#fff" /><circle cx="17" cy="17" r="6.200" fill="#2f72e4" /></svg>) },
];

export default function App() {
  return (
    <>
      <Global />
      <Screen>
        <TitleStrip>
          <AppName><Orb size={23} />admin@2C:C8:1B:37:CF:A7 (Rofiq) - WinBox v6.45.9 on hAP (mipsbe)</AppName>
          <Watermark>www.<WatermarkName>BANDICAM</WatermarkName>.com</Watermark>
          <Controls>
            <Control aria-label="Minimize"><svg width="16" height="14"><path d="M0 7h15" stroke="#222" strokeWidth="1.500" /></svg></Control>
            <Control aria-label="Restore"><svg width="15" height="14" viewBox="0 0 15 14"><path d="M1 4h10v9H1zM4 4V1h10v9h-3" fill="none" stroke="#222" strokeWidth="1.400" /></svg></Control>
            <Control aria-label="Close"><svg width="17" height="14" viewBox="0 0 17 14"><path d="M1 0l14 14M15 0L1 14" stroke="#222" strokeWidth="1.400" /></svg></Control>
          </Controls>
        </TitleStrip>
        <MenuBar>
          <MenuItem>Session</MenuItem><MenuItem>Settings</MenuItem><MenuItem>Dashboard</MenuItem>
        </MenuBar>
        <MainBar>
          <ToolGroup><ToolButton aria-label="Undo"><Turn /></ToolButton><ToolButton aria-label="Redo"><Turn redo /></ToolButton></ToolGroup>
          <SafeMode>Safe Mode</SafeMode>
          <label htmlFor="session">Session:</label>
          <SessionField id="session" readOnly defaultValue="2C:C8:1B:37:CF:A7" />
        </MainBar>
        <Main>
          <Side>
            <Spine>RouterOS WinBox</Spine>
            <SideList>
              {sideItems.map((name) => (
                <SideItem key={name}>
                  {name && (
                    <SideButton>
                      <svg width="23" height="23" viewBox="0 0 24 24">{glyphs[name]}</svg>
                      {name}
                      {withMenu.has(name) && <Flyout />}
                    </SideButton>
                  )}
                </SideItem>
              ))}
            </SideList>
          </Side>
          <Desktop>
            <Firewall />
            <Settings />
            <Access />
            <ProxyRule />
          </Desktop>
        </Main>
        <TaskBar>
          <Start aria-label="Start"><svg width="24" height="24" viewBox="0 0 24 24"><path d="M0 3.500l10-1.400v9.400H0zM11.200 2L24 0v11.500H11.200zM0 12.600h10V22L0 20.500zM11.200 12.600H24V24l-12.800-2z" fill="#fff" /></svg></Start>
          <SearchBox>
            <svg width="25" height="25" viewBox="0 0 25 25"><circle cx="15.500" cy="9" r="7.500" fill="none" stroke="#222" strokeWidth="1.700" /><path d="M10 14.500L1 23.500" stroke="#222" strokeWidth="1.700" /></svg>
            <SearchInput placeholder="Type here to search" aria-label="Search" />
          </SearchBox>
          <Apps>
            {apps.map((a) => <AppButton key={a.name} aria-label={a.name} $open={!a.closed} $active={a.active}>{a.art}</AppButton>)}
          </Apps>
          <Tray>
            <Weather>
              <svg width="29" height="29" viewBox="0 0 29 29"><defs><linearGradient id="sun" x1="0" y1="0" x2="1" y2="1"><stop offset="0" stopColor="#fbc02f" /><stop offset="1" stopColor="#f4701e" /></linearGradient></defs><circle cx="14.500" cy="14.500" r="14" fill="url(#sun)" /></svg>
              {'31°C  Cerah'}
            </Weather>
            <TrayButton aria-label="Show hidden icons"><svg width="18" height="22" viewBox="0 0 18 22"><path d="M1 15l8-8 8 8" fill="none" stroke="#fff" strokeWidth="1.700" /></svg></TrayButton>
            <TrayButton aria-label="Network"><svg width="24" height="22" viewBox="0 0 24 22" fill="none" stroke="#fff" strokeWidth="1.500"><path d="M8 3h15v12H5V9M14 15v4M9 19.500h10M1 2h5v5H1zM3.500 7v5" /></svg></TrayButton>
            <TrayButton aria-label="Meet now"><svg width="18" height="24" viewBox="0 0 18 24" fill="none" stroke="#fff" strokeWidth="1.500"><rect x="1" y="7" width="11" height="11" rx="2" /><path d="M12 11l4-2v7l-4-2M3 3c3-2 6-2 9 0M3 21.500c3 2 6 2 9 0" /></svg></TrayButton>
            <TrayButton aria-label="Volume muted"><svg width="24" height="24" viewBox="0 0 24 24"><path d="M1 9h3l5-5v16l-5-5H1z" fill="none" stroke="#fff" strokeWidth="1.500" /><circle cx="17" cy="17" r="6.500" fill="#da2b3c" /><path d="M14.500 14.500l5 5M19.500 14.500l-5 5" stroke="#fff" strokeWidth="1.500" /></svg></TrayButton>
            <TrayButton>ENG</TrayButton>
            <Clock>11:39<br />13/09/2023</Clock>
            <Notice aria-label="2 notifications">
              <svg width="24" height="24" viewBox="0 0 24 24"><path d="M0 0h24v18h-9l-5 5v-5H0z" fill="#fff" /><path d="M4 5h16M4 9h16M4 13h12" stroke="#25324c" strokeWidth="1.500" /></svg>
              <Badge>2</Badge>
            </Notice>
          </Tray>
        </TaskBar>
      </Screen>
    </>
  );
}
